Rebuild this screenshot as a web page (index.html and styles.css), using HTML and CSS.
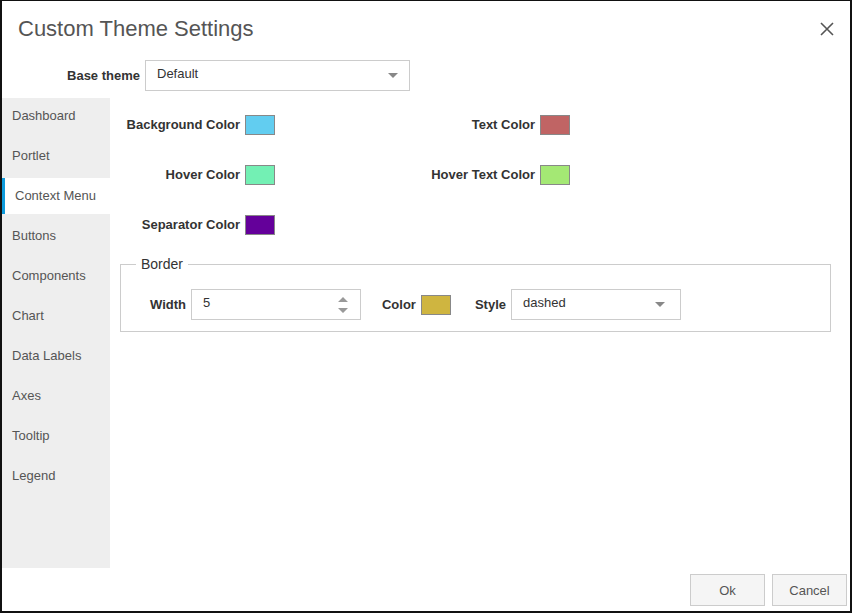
FILE: index.html
```html
<!DOCTYPE html>
<html>
<head>
<meta charset="utf-8">
<link rel="stylesheet" href="styles.css">
</head>
<body>
<div class="dialog">
  <div class="header">
    <div class="title">Custom Theme Settings</div>
    <svg class="close" width="14" height="14" viewBox="0 0 14 14"><path d="M1 1 L13 13 M13 1 L1 13" stroke="#555" stroke-width="1.6" fill="none"/></svg>
  </div>
  <div class="base-row">
    <div class="base-label">Base theme</div>
    <div class="select base-select"><span>Default</span><svg class="caret" width="10" height="5" viewBox="0 0 10 5"><path d="M0 0 L10 0 L5 5 Z" fill="#888"/></svg></div>
  </div>
  <div class="body">
    <div class="sidebar">
      <div class="nav-item">Dashboard</div>
      <div class="nav-item">Portlet</div>
      <div class="nav-item active">Context Menu</div>
      <div class="nav-item">Buttons</div>
      <div class="nav-item">Components</div>
      <div class="nav-item">Chart</div>
      <div class="nav-item">Data Labels</div>
      <div class="nav-item">Axes</div>
      <div class="nav-item">Tooltip</div>
      <div class="nav-item">Legend</div>
    </div>
    <div class="content">
      <div class="color-grid">
        <div class="lbl">Background Color</div><div class="swatch sw-bg"></div>
        <div class="lbl">Text Color</div><div class="swatch sw-text"></div>
        <div class="lbl">Hover Color</div><div class="swatch sw-hover"></div>
        <div class="lbl">Hover Text Color</div><div class="swatch sw-hovertext"></div>
        <div class="lbl">Separator Color</div><div class="swatch sw-sep"></div>
      </div>
      <fieldset class="border-set">
        <legend>Border</legend>
        <div class="border-row">
          <div class="lbl">Width</div>
          <div class="select num-input"><span>5</span>
            <svg class="spin" width="10" height="16" viewBox="0 0 10 16"><path d="M0 5 L5 0 L10 5 Z M0 11 L10 11 L5 16 Z" fill="#999"/></svg>
          </div>
          <div class="lbl gap-l">Color</div>
          <div class="swatch sw-border"></div>
          <div class="lbl gap-l2">Style</div>
          <div class="select style-select"><span>dashed</span><svg class="caret" width="10" height="5" viewBox="0 0 10 5"><path d="M0 0 L10 0 L5 5 Z" fill="#888"/></svg></div>
        </div>
      </fieldset>
    </div>
  </div>
  <div class="footer">
    <button class="btn">Ok</button>
    <button class="btn">Cancel</button>
  </div>
</div>
</body>
</html>
```
FILE: styles.css
```css
* { box-sizing: border-box; }
html, body { margin: 0; padding: 0; background: #fff; }
body { font-family: "Liberation Sans", Arial, sans-serif; font-size: 13px; color: #333; }

.dialog {
  width: 852px;
  height: 613px;
  border: 1px solid #111;
  border-left: 2px solid #111;
  border-bottom-width: 2px;
  border-right-width: 2px;
  display: flex;
  flex-direction: column;
  background: #fff;
}

.header {
  height: 55px;
  display: flex;
  align-items: center;
  justify-content: space-between;
  padding: 0 16px 0 16px;
}
.title { font-size: 22px; color: #555; }

.base-row {
  margin-top: 4px;
  height: 31px;
  display: flex;
  align-items: center;
}
.base-label {
  width: 143px;
  text-align: right;
  font-weight: bold;
  padding-right: 5px;
}
.select {
  height: 31px;
  flex: none;
  border: 1px solid #ccc;
  background: #fff;
  display: flex;
  align-items: center;
  justify-content: space-between;
  padding: 0 11px 1px 11px;
  color: #333;
}
.select span { margin-top: -4px; }
.base-select { width: 265px; }
.caret { margin-top: 1px; }

.body {
  margin-top: 7px;
  height: 470px;
  display: flex;
}
.sidebar {
  width: 108px;
  background: #eee;
  display: flex;
  flex-direction: column;
}
.nav-item {
  height: 36px;
  margin-bottom: 4px;
  line-height: 36px;
  padding-left: 10px;
  color: #555;
}
.nav-item.active {
  background: #fff;
  border-left: 3px solid #0e9bdc;
  padding-left: 10px;
}

.content {
  flex: 1;
  padding: 17px 19px 0 10px;
}
.color-grid {
  display: grid;
  grid-template-columns: 120px 30px 255px 30px;
  grid-auto-rows: 20px;
  column-gap: 5px;
  row-gap: 30px;
  align-items: center;
}
.lbl { font-weight: bold; text-align: right; color: #333; line-height: 18px; }
.swatch {
  width: 30px;
  height: 20px;
  border: 1px solid #888;
}
.sw-bg { background: #62cdf0; }
.sw-text { background: #c06464; }
.sw-hover { background: #73f0b4; }
.sw-hovertext { background: #a4e874; }
.sw-sep { background: #64009a; }
.sw-border { background: #cfb540; }

.border-set {
  margin: 21px 0 0 0;
  border: 1px solid #ccc;
  padding: 17px 0 11px 15px;
}
.border-set legend {
  margin-left: 0;
  padding: 0 5px;
  font-size: 14px;
  line-height: 16px;
  color: #333;
}
.border-row {
  display: flex;
  align-items: center;
  gap: 5px;
  padding-left: 14px;
}
.num-input { width: 170px; padding-right: 12px; }
.spin { margin-top: 1px; }
.gap-l { margin-left: 16px; }
.gap-l2 { margin-left: 19px; }
.style-select { width: 170px; padding-right: 15px; }

.footer {
  flex: 1;
  display: flex;
  justify-content: flex-end;
  align-items: flex-start;
  padding: 6px 3px 0 0;
  gap: 7px;
}
.btn {
  width: 75px;
  height: 32px;
  background: #f5f5f5;
  border: 1px solid #ccc;
  font-family: "Liberation Sans", Arial, sans-serif;
  font-size: 13px;
  color: #555;
  padding: 0;
}
```
